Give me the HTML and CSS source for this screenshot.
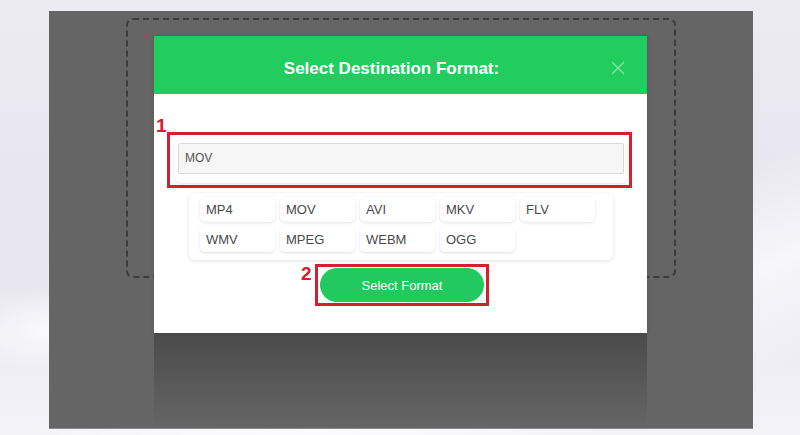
FILE: index.html
```html
<!DOCTYPE html>
<html>
<head>
<meta charset="utf-8">
<link rel="stylesheet" href="styles.css">
</head>
<body>
<div class="panel">
  <div class="dropzone"></div>
  <div class="modal">
    <div class="modal-header">
      <h2 class="modal-title">Select Destination Format:</h2>
      <svg class="close" width="14" height="14" viewBox="0 0 14 14"><path d="M1 1L13 13M13 1L1 13" stroke="#8ee6ac" stroke-width="1.2" fill="none"/></svg>
    </div>
    <div class="modal-body">
      <div class="step step-one">
        <span class="step-num num-one">1</span>
        <div class="input-card">
          <div class="input">MOV</div>
        </div>
      </div>
      <div class="format-card">
        <div class="fmt">MP4</div>
        <div class="fmt">MOV</div>
        <div class="fmt">AVI</div>
        <div class="fmt">MKV</div>
        <div class="fmt">FLV</div>
        <div class="fmt">WMV</div>
        <div class="fmt">MPEG</div>
        <div class="fmt">WEBM</div>
        <div class="fmt">OGG</div>
      </div>
      <div class="btn-row">
        <div class="step step-two">
          <span class="step-num num-two">2</span>
          <button class="select-btn">Select Format</button>
        </div>
      </div>
    </div>
  </div>
</div>
</body>
</html>
```
FILE: styles.css
```css
html, body {
  margin: 0;
  padding: 0;
}
body {
  width: 800px;
  height: 435px;
  overflow: hidden;
  font-family: "Liberation Sans", Arial, sans-serif;
  background:
    radial-gradient(ellipse 160px 60px at 60px 330px, rgba(255,255,255,0.8), rgba(255,255,255,0) 70%),
    linear-gradient(160deg, rgba(255,255,255,0) 60%, rgba(255,255,255,0.7) 75%, rgba(255,255,255,0) 90%),
    linear-gradient(180deg, #eceaf3 0%, #e6e5f0 60%, #f4f3f8 100%);
  padding-top: 11px;
  box-sizing: border-box;
}
.panel {
  position: relative;
  margin-left: 49px;
  width: 704px;
  height: 418px;
  background: #656565;
  border-bottom: 1px solid #8a8a8a;
  box-sizing: border-box;
  padding-top: 7px;
}
.dropzone {
  margin-left: 77px;
  width: 550px;
  height: 260px;
  box-sizing: border-box;
  border: 2px dashed #3b3b3b;
  border-radius: 7px;
}
.modal {
  position: absolute;
  left: 105px;
  top: 25px;
  width: 493px;
  height: 297px;
  background: #fff;
  box-shadow: 0 0 4px rgba(0,0,0,0.15);
}
.modal::after {
  content: "";
  position: absolute;
  left: 0;
  right: 0;
  top: 100%;
  height: 95px;
  background: linear-gradient(180deg, rgba(0,0,0,0.26), rgba(0,0,0,0));
}
.modal-header {
  position: relative;
  height: 58px;
  box-sizing: border-box;
  padding: 8px 18px 0 0;
  background: #21cd5e;
  display: flex;
  align-items: center;
  justify-content: center;
}
.modal-title {
  margin: 0;
  color: #fff;
  font-size: 17px;
  font-weight: bold;
}
.close {
  position: absolute;
  right: 22px;
  top: 25px;
}
.modal-body {
  display: flex;
  flex-direction: column;
}
.step {
  position: relative;
  border: 3px solid #d4202c;
  box-sizing: border-box;
}
.step-num {
  position: absolute;
  color: #d4202c;
  font-weight: bold;
  font-size: 19px;
  line-height: 16px;
  font-family: "Liberation Sans", Arial, sans-serif;
}
.step-one {
  margin: 38px 0 0 13px;
  width: 465px;
  height: 56px;
  padding: 4px 2px 2px 5px;
}
.num-one {
  left: -14px;
  top: -17px;
}
.input-card {
  background: #fff;
  border-radius: 6px;
  box-shadow: 0 1px 3px rgba(0,0,0,0.12);
  padding: 4px 3px 9px 3px;
}
.input {
  height: 31px;
  box-sizing: border-box;
  background: #f6f6f6;
  border: 1px solid #d9d9d9;
  border-radius: 2px;
  font-size: 12px;
  color: #555;
  padding-left: 6px;
  line-height: 29px;
}
.format-card {
  margin: 5px 0 0 35px;
  width: 424px;
  box-sizing: border-box;
  padding: 4px 11px 8px 11px;
  background: #fff;
  border-radius: 6px;
  box-shadow: 0 1px 4px rgba(0,0,0,0.12);
  display: grid;
  grid-template-columns: repeat(5, 75px);
  column-gap: 5px;
  row-gap: 5px;
}
.fmt {
  height: 25px;
  line-height: 25px;
  padding-left: 6px;
  font-size: 13px;
  color: #4a4a4a;
  background: #fff;
  border-radius: 5px;
  box-shadow: 0 1px 3px rgba(0,0,0,0.12);
}
.btn-row {
  margin: 4px 0 0 161px;
}
.step-two {
  width: 174px;
  height: 42px;
  padding: 1px 2px;
}
.num-two {
  left: -17px;
  top: -1px;
}
.select-btn {
  display: block;
  width: 164px;
  height: 34px;
  border: none;
  border-radius: 17px;
  background: #21c95e;
  color: #fff;
  font-family: "Liberation Sans", Arial, sans-serif;
  font-size: 13px;
  padding: 0;
}
```
